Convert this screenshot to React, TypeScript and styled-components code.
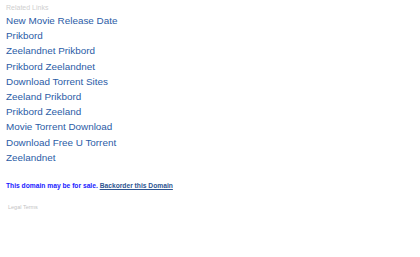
import styled, { createGlobalStyle } from "styled-components";

const GlobalStyle = createGlobalStyle`
  html, body {
    margin: 0;
    padding: 0;
    background: #fff;
    font-family: "Liberation Sans", Arial, sans-serif;
  }
`;

const links = [
  "New Movie Release Date",
  "Prikbord",
  "Zeelandnet Prikbord",
  "Prikbord Zeelandnet",
  "Download Torrent Sites",
  "Zeeland Prikbord",
  "Prikbord Zeeland",
  "Movie Torrent Download",
  "Download Free U Torrent",
  "Zeelandnet",
];

const Page = styled.div`
  padding: 3px 6px 0;
  width: 420px;
  height: 257px;
  box-sizing: border-box;
`;

const Heading = styled.div`
  font-size: 7px;
  color: #cfcfcf;
  line-height: 9px;
  margin-bottom: 1px;
`;

const LinkList = styled.ul`
  list-style: none;
  margin: 0;
  padding: 0;
`;

const LinkItem = styled.li`
  font-size: 9.9px;
  line-height: 15.2px;
  a {
    color: #2b5ca6;
    text-decoration: none;
  }
`;

const SaleLine = styled.div`
  margin-top: 16px;
  font-size: 6.7px;
  font-weight: 700;
  color: #1a1aff;
  line-height: 10px;

  a {
    color: #2d5491;
    text-decoration: underline;
  }
`;

const Legal = styled.div`
  margin-top: 13px;
  padding-left: 2px;
  font-size: 5.5px;
  color: #c4c4c4;
`;

export default function App() {
  return (
    <Page>
      <GlobalStyle />
      <Heading>Related Links</Heading>
      <LinkList>
        {links.map((l) => (
          <LinkItem key={l}>
            <a href="#">{l}</a>
          </LinkItem>
        ))}
      </LinkList>
      <SaleLine>
        This domain may be for sale. <a href="#">Backorder this Domain</a>
      </SaleLine>
      <Legal>Legal Terms</Legal>
    </Page>
  );
}
